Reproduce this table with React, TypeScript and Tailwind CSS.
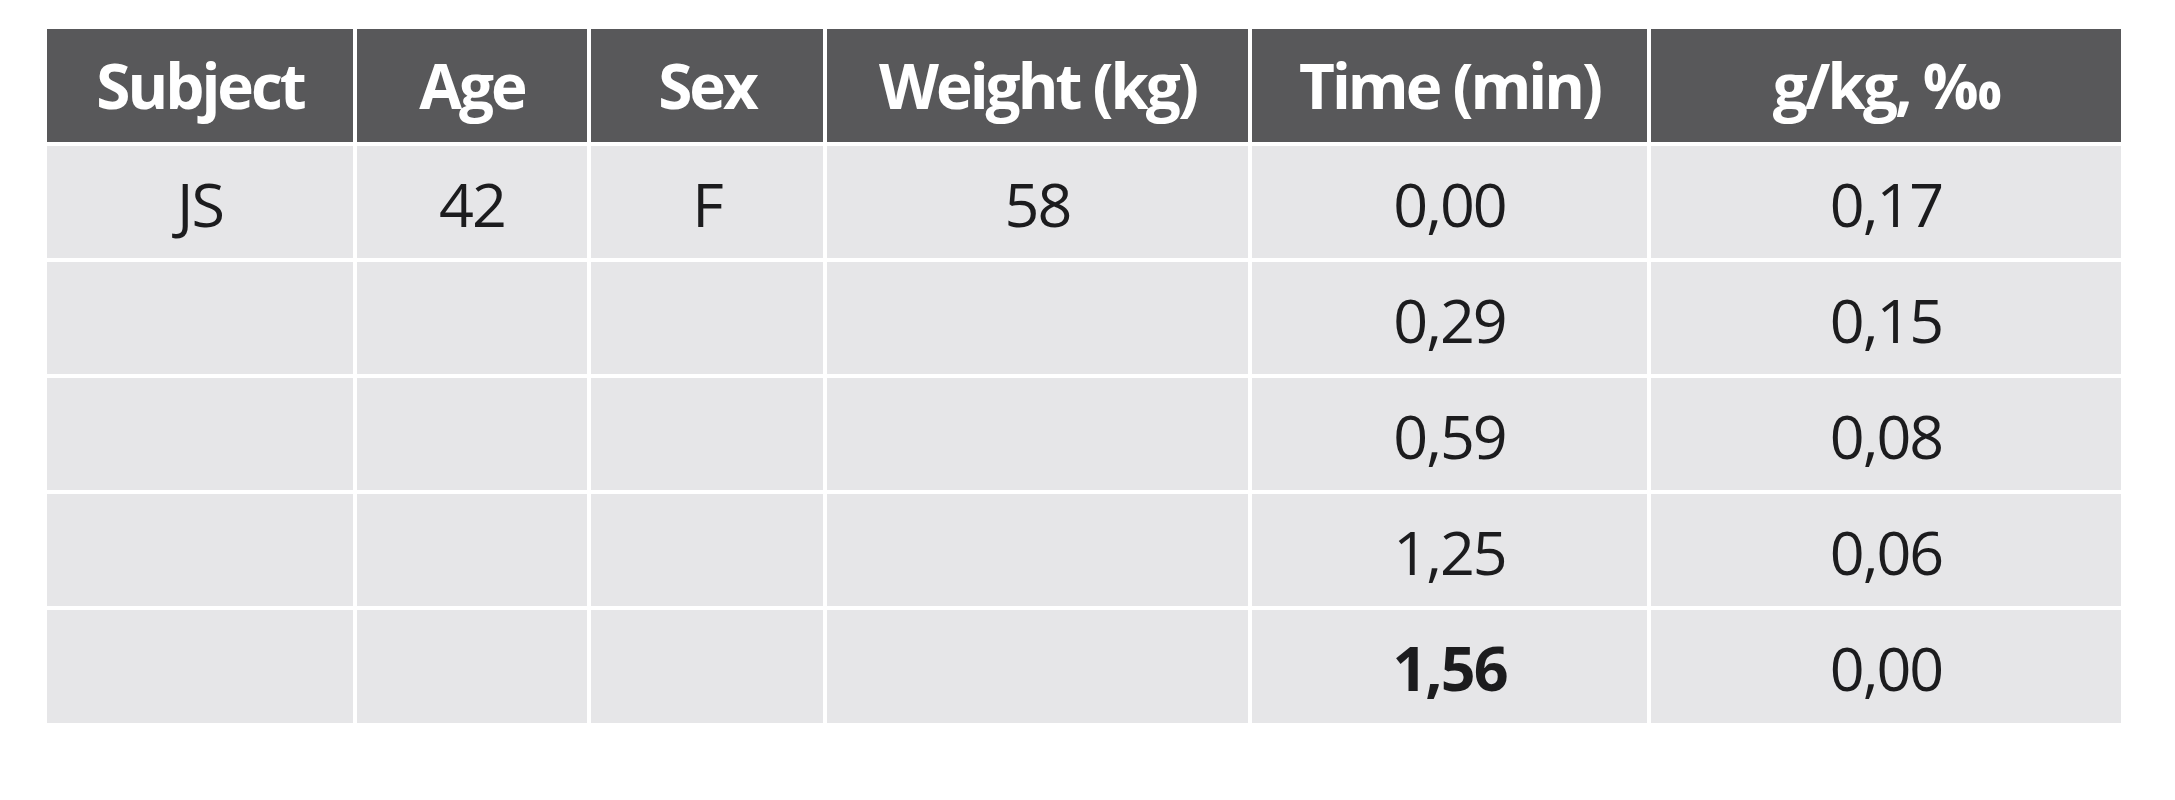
import React from "react";

const headers = ["Subject", "Age", "Sex", "Weight (kg)", "Time (min)", "g/kg, ‰"];

const rows: { cells: string[]; bold?: boolean }[] = [
  { cells: ["JS", "42", "F", "58", "0,00", "0,17"] },
  { cells: ["", "", "", "", "0,29", "0,15"] },
  { cells: ["", "", "", "", "0,59", "0,08"] },
  { cells: ["", "", "", "", "1,25", "0,06"] },
  { cells: ["", "", "", "", "1,56", "0,00"], bold: true },
];

export default function App() {
  return (
    <div className="w-[2175px] h-[800px] bg-white pt-[29px] pl-[47px]" style={{ fontFamily: '"Open Sans", "Noto Sans", sans-serif' }}>
      <div className="grid w-[2074px] grid-cols-[306px_230px_232px_421px_395px_470px] grid-rows-[113px_112px_112px_112px_112px_113px] gap-[4px] bg-white">
        {headers.map((h) => (
          <div key={h} className="flex items-center justify-center bg-[#58585a] text-white font-bold text-[62px] tracking-[-3px] leading-none pb-[2px]">
            {h}
          </div>
        ))}
        {rows.map((r, ri) =>
          r.cells.map((c, ci) => (
            <div
              key={`${ri}-${ci}`}
              className={`flex items-center justify-center bg-[#e6e6e8] text-[#1c1c1e] text-[61px] tracking-[-2px] leading-none pt-[2px] ${r.bold && ci === 4 ? "font-bold" : "font-normal"}`}
            >
              {c}
            </div>
          ))
        )}
      </div>
    </div>
  );
}
